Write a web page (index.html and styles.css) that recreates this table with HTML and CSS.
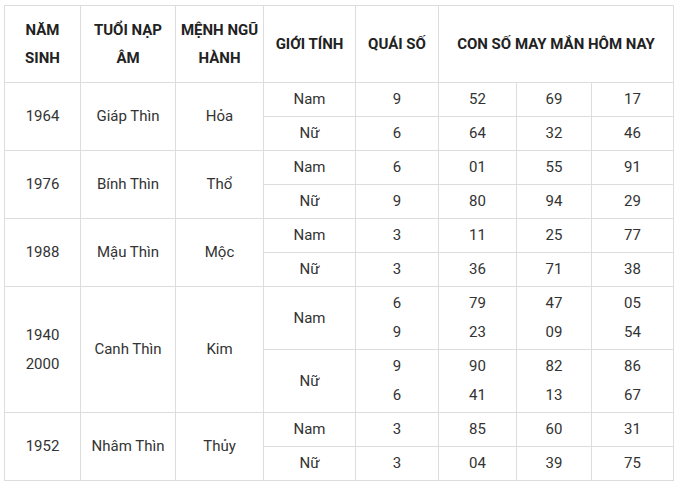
FILE: index.html
```html
<!DOCTYPE html>
<html lang="vi">
<head>
<meta charset="utf-8">
<link rel="stylesheet" href="styles.css">
</head>
<body>
<table class="lucky">
  <colgroup>
    <col class="c1"><col class="c2"><col class="c3"><col class="c4"><col class="c5"><col class="c6"><col class="c7"><col class="c8">
  </colgroup>
  <thead>
    <tr>
      <th>NĂM<br>SINH</th>
      <th>TUỔI NẠP<br>ÂM</th>
      <th>MỆNH NGŨ<br>HÀNH</th>
      <th>GIỚI TÍNH</th>
      <th>QUÁI SỐ</th>
      <th colspan="3">CON SỐ MAY MẮN HÔM NAY</th>
    </tr>
  </thead>
  <tbody>
    <tr><td rowspan="2">1964</td><td rowspan="2">Giáp Thìn</td><td rowspan="2">Hỏa</td><td>Nam</td><td>9</td><td>52</td><td>69</td><td>17</td></tr>
    <tr><td>Nữ</td><td>6</td><td>64</td><td>32</td><td>46</td></tr>
    <tr><td rowspan="2">1976</td><td rowspan="2">Bính Thìn</td><td rowspan="2">Thổ</td><td>Nam</td><td>6</td><td>01</td><td>55</td><td>91</td></tr>
    <tr><td>Nữ</td><td>9</td><td>80</td><td>94</td><td>29</td></tr>
    <tr><td rowspan="2">1988</td><td rowspan="2">Mậu Thìn</td><td rowspan="2">Mộc</td><td>Nam</td><td>3</td><td>11</td><td>25</td><td>77</td></tr>
    <tr><td>Nữ</td><td>3</td><td>36</td><td>71</td><td>38</td></tr>
    <tr><td rowspan="2">1940<br>2000</td><td rowspan="2">Canh Thìn</td><td rowspan="2">Kim</td><td>Nam</td><td>6<br>9</td><td>79<br>23</td><td>47<br>09</td><td>05<br>54</td></tr>
    <tr><td>Nữ</td><td>9<br>6</td><td>90<br>41</td><td>82<br>13</td><td>86<br>67</td></tr>
    <tr><td rowspan="2">1952</td><td rowspan="2">Nhâm Thìn</td><td rowspan="2">Thủy</td><td>Nam</td><td>3</td><td>85</td><td>60</td><td>31</td></tr>
    <tr><td>Nữ</td><td>3</td><td>04</td><td>39</td><td>75</td></tr>
  </tbody>
</table>
</body>
</html>
```

FILE: styles.css
```css
html, body {
  margin: 0;
  padding: 0;
  background: #ffffff;
}
body {
  padding: 5px 0 0 4px;
  font-family: Roboto, "Noto Sans", Arial, sans-serif;
  font-size: 15px;
  color: #333333;
}
.lucky {
  border-collapse: collapse;
  table-layout: fixed;
  width: 669px;
}
.c1 { width: 76px; }
.c2 { width: 95px; }
.c3 { width: 88px; }
.c4 { width: 92px; }
.c5 { width: 83px; }
.c6 { width: 78px; }
.c7 { width: 75px; }
.c8 { width: 82px; }
.lucky th,
.lucky td {
  border: 1px solid #dddddd;
  text-align: center;
  vertical-align: middle;
}
.lucky th {
  font-weight: 700;
  color: #222222;
  line-height: 28px;
  padding: 10px 4px;
}
.lucky td {
  line-height: 29px;
  padding: 2px 4px;
}
```
